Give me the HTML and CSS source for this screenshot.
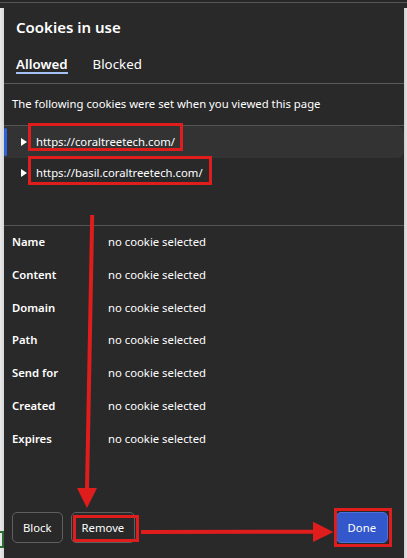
FILE: index.html
```html
<!DOCTYPE html>
<html lang="en">
<head>
<meta charset="utf-8">
<title>Cookies in use</title>
<link rel="stylesheet" href="styles.css">
</head>
<body>
<div class="topline"></div>
<div class="frame">
  <div class="edge-left">
    <div class="edge-spacer"></div>
    <div class="green-tab"></div>
  </div>
  <div class="dialog">
    <h1 class="title">Cookies in use</h1>
    <div class="tabs">
      <span class="tab active">Allowed</span>
      <span class="tab">Blocked</span>
    </div>
    <p class="desc">The following cookies were set when you viewed this page</p>
    <div class="tree">
      <div class="node selected"><span class="bar"></span><span class="twisty"></span><span class="url">https://coraltreetech.com/</span></div>
      <div class="node"><span class="bar"></span><span class="twisty"></span><span class="url">https://basil.coraltreetech.com/</span></div>
    </div>
    <dl class="details">
      <dt>Name</dt><dd>no cookie selected</dd>
      <dt>Content</dt><dd>no cookie selected</dd>
      <dt>Domain</dt><dd>no cookie selected</dd>
      <dt>Path</dt><dd>no cookie selected</dd>
      <dt>Send for</dt><dd>no cookie selected</dd>
      <dt>Created</dt><dd>no cookie selected</dd>
      <dt>Expires</dt><dd>no cookie selected</dd>
    </dl>
    <div class="buttons">
      <button class="btn">Block</button>
      <button class="btn">Remove</button>
      <span class="btn-spacer"></span>
      <button class="btn primary">Done</button>
    </div>
  </div>
  <div class="edge-right"></div>
</div>
<svg class="annot" width="407" height="558" viewBox="0 0 407 558" aria-hidden="true">
  <g fill="none" stroke="#e01d1d" stroke-width="3">
    <rect x="29.5" y="124.5" width="152" height="25"/>
    <rect x="29.5" y="157.5" width="181" height="26"/>
    <rect x="74.5" y="516.5" width="63" height="24"/>
    <rect x="335.5" y="509.5" width="55" height="36"/>
  </g>
  <g stroke="#e01d1d" stroke-width="4" fill="none">
    <line x1="92.2" y1="215" x2="87" y2="490"/>
    <line x1="141" y1="532" x2="315" y2="531.7"/>
  </g>
  <g fill="#e01d1d">
    <polygon points="77,488 97,488 87,508"/>
    <polygon points="313,521.7 313,542 333.5,532"/>
  </g>
</svg>
</body>
</html>
```

FILE: styles.css
```css
* { box-sizing: border-box; }

html, body {
  margin: 0;
  padding: 0;
}

body {
  width: 407px;
  height: 558px;
  overflow: hidden;
  background: #292929;
  font-family: "Noto Sans", "Open Sans", sans-serif;
  color: #ffffff;
  position: relative;
}

.topline {
  height: 3px;
  background: #262626;
  border-bottom: 1px solid #575757;
}

.frame {
  display: flex;
  height: 555px;
}

.edge-left {
  width: 4px;
  margin-top: 5px;
  background: linear-gradient(to right, #e9e9e9, #d6d6d6);
  display: flex;
  flex-direction: column;
}

.edge-spacer {
  height: 523px;
}

.green-tab {
  width: 4px;
  height: 17px;
  border: 2px solid #2a6e30;
  border-left: none;
  background: #e9e9e9;
}

.edge-right {
  width: 3px;
  margin-top: 5px;
  background: linear-gradient(to right, #cfcfcf, #e4e4e4);
}

.dialog {
  flex: 1;
  display: flex;
  flex-direction: column;
  background: #292929;
}

.title {
  margin: 14px 0 0;
  padding-left: 12px;
  font-size: 15px;
  line-height: 20px;
  font-weight: 600;
  color: #ffffff;
}

.tabs {
  display: flex;
  gap: 25px;
  margin-top: 20px;
  padding: 0 12px 9px;
  border-bottom: 1px solid #5a5a5a;
}

.tab {
  font-size: 13.3px;
  line-height: 15px;
  border-bottom: 2px solid transparent;
  color: #ffffff;
}

.tab.active {
  font-weight: 600;
  border-bottom-color: #a6c2f4;
}

.desc {
  margin: 12px 0 0;
  padding-left: 8px;
  font-size: 11.3px;
  line-height: 16px;
  color: #ffffff;
}

.tree {
  margin-top: 13px;
  height: 101px;
  border-top: 1px solid #555555;
  border-bottom: 1px solid #555555;
}

.node {
  display: flex;
  align-items: center;
  height: 31.5px;
  border-radius: 0 7px 7px 0;
}

.node.selected {
  background: #333333;
}

.bar {
  width: 3px;
  height: 28px;
  border-radius: 2px;
}

.node.selected .bar {
  background: #2f64d8;
}

.twisty {
  margin-left: 14px;
  width: 0;
  height: 0;
  border-left: 6px solid #ffffff;
  border-top: 4.5px solid transparent;
  border-bottom: 4.5px solid transparent;
}

.url {
  margin-left: 9px;
  font-size: 11.3px;
  line-height: 16px;
  color: #ffffff;
}

.details {
  margin: 0;
  padding-left: 8px;
  display: grid;
  grid-template-columns: 96px 1fr;
  grid-auto-rows: 32.8px;
  font-size: 11.3px;
  line-height: 32.8px;
}

.details dt {
  font-weight: 600;
  color: #ffffff;
}

.details dd {
  margin: 0;
  color: #ffffff;
}

.buttons {
  margin-top: auto;
  display: flex;
  gap: 8px;
  padding: 0 16px 15px 8px;
}

.btn-spacer {
  flex: 1;
}

.btn {
  height: 31px;
  padding: 0 10px;
  font-family: inherit;
  font-size: 11.3px;
  color: #ffffff;
  background: transparent;
  border: 1px solid #5f5f5f;
  border-radius: 5px;
}

.btn.primary {
  padding: 0 11px;
  background: #3258cb;
  border-color: #4d70d9;
}

.annot {
  position: absolute;
  left: 0;
  top: 0;
  pointer-events: none;
}
```
